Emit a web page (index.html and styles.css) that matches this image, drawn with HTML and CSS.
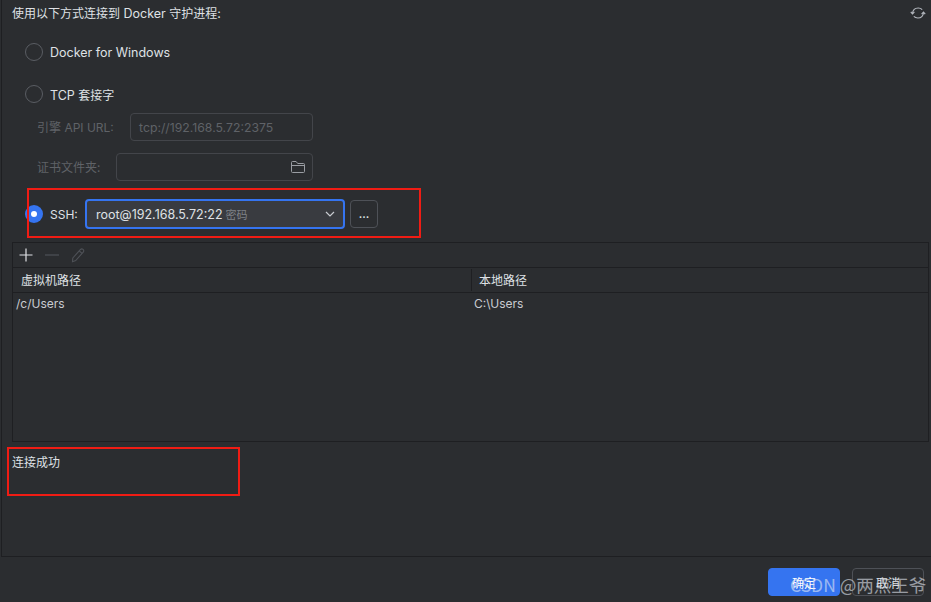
FILE: index.html
```html
<!DOCTYPE html>
<html lang="zh">
<head>
<meta charset="utf-8">
<title>Docker</title>
<link rel="stylesheet" href="styles.css">
</head>
<body>
<div class="app">
  <main class="content">
    <div class="title-row">
      <div class="title"><span class="cjk">使用以下方式连接到</span> Docker <span class="cjk">守护进程</span>:</div>
      <svg class="refresh" viewBox="0 0 16 16" width="16" height="16" fill="none" stroke="#b4b8bf" stroke-width="1.2">
        <path d="M2.5 8.5C2.8 5.2 5.2 3 8.2 3c1.6 0 3 .6 4 1.6"/>
        <path d="M.8 6.8l1.7 2 1.9-2"/>
        <path d="M13.5 7.5c-.3 3.3-2.7 5.5-5.7 5.5-1.6 0-3-.6-4-1.6"/>
        <path d="M15.2 9.2l-1.7-2-1.9 2"/>
      </svg>
    </div>
    <div class="options">
      <label class="radio-row row-docker"><span class="radio"></span><span>Docker for Windows</span></label>
      <label class="radio-row row-tcp"><span class="radio"></span><span>TCP <span class="cjk">套接字</span></span></label>
      <div class="field-row row-url">
        <span class="field-label"><span class="cjk">引擎</span> API URL:</span>
        <div class="input url-input">tcp://192.168.5.72:2375</div>
      </div>
      <div class="field-row row-cert">
        <span class="field-label cjk">证书文件夹:</span>
        <div class="input cert-input">
          <svg viewBox="0 0 16 16" width="16" height="16" fill="none" stroke="#9a9da3" stroke-width="1">
            <path d="M1.5 12.5v-9a1 1 0 0 1 1-1h3.6l1.6 2h5.8a1 1 0 0 1 1 1v7a1 1 0 0 1-1 1h-11a1 1 0 0 1-1-1z"/>
            <path d="M1.5 6.5h13"/>
          </svg>
        </div>
      </div>
      <div class="radio-row row-ssh">
        <span class="radio checked"></span>
        <span class="ssh-label">SSH:</span>
        <div class="select">
          <span class="select-main">root@192.168.5.72:22</span>
          <span class="select-sub cjk">密码</span>
          <svg class="chevron" viewBox="0 0 12 12" width="12" height="12" fill="none" stroke="#c9ccd1" stroke-width="1.2"><path d="M2 4l4 4 4-4"/></svg>
        </div>
        <button class="more">...</button>
      </div>
    </div>
    <section class="table">
      <div class="toolbar">
        <svg viewBox="0 0 16 16" width="16" height="16" fill="none" stroke="#dfe1e5" stroke-width="1.2"><path d="M8 1.5v13M1.5 8h13"/></svg>
        <svg viewBox="0 0 16 16" width="16" height="16" fill="none" stroke="#4e5157" stroke-width="1.2"><path d="M1 8h14"/></svg>
        <svg viewBox="0 0 16 16" width="16" height="16" fill="none" stroke="#4e5157" stroke-width="1.1"><path d="M2.8 11L10.5 2.5a1.9 1.9 0 0 1 2.9 2.4L5.7 13.6l-3.2 1.2z"/><path d="M9.3 4l2.8 2.4"/></svg>
      </div>
      <div class="thead">
        <div class="th th-a cjk">虚拟机路径</div>
        <div class="th th-b cjk">本地路径</div>
      </div>
      <div class="tr">
        <div class="td td-a">/c/Users</div>
        <div class="td td-b">C:\Users</div>
      </div>
    </section>
    <div class="status cjk">连接成功</div>
  </main>
  <footer class="footer">
    <button class="btn primary cjk">确定</button>
    <button class="btn cjk">取消</button>
  </footer>
  <div class="mark mark-ssh"></div>
  <div class="mark mark-status"></div>
  <div class="watermark">CSDN @两点王爷</div>
</div>
</body>
</html>
```
FILE: styles.css
```css
* { box-sizing: border-box; }
html, body { margin: 0; padding: 0; }
body {
  width: 931px;
  height: 602px;
  overflow: hidden;
  background: #2b2d30;
  color: #dfe1e5;
  font-family: Inter, "Noto Sans CJK SC", sans-serif;
  font-size: 12.5px;
}
.cjk { font-family: "Noto Sans CJK SC", sans-serif; font-size: 12px; }
.app { position: relative; width: 931px; height: 602px; display: flex; flex-direction: column; }
.content { height: 557px; margin-left: 1px; border-left: 1px solid #1e1f22; border-bottom: 1px solid #1e1f22; padding-left: 10px; display: flex; flex-direction: column; }
.title-row { height: 25px; display: flex; align-items: center; justify-content: space-between; padding-right: 5px; }
.title { line-height: 25px; }
.refresh { flex: none; }
.options { padding-left: 13px; display: flex; flex-direction: column; height: 217px; }
.radio-row { display: flex; align-items: center; }
.radio { width: 18px; height: 18px; border-radius: 50%; border: 1px solid #5a5d63; margin-right: 7px; flex: none; }
.radio.checked { background: #3574f0; border: 0; position: relative; }
.radio.checked::after { content: ""; position: absolute; left: 6px; top: 6px; width: 6px; height: 6px; border-radius: 50%; background: #fff; }
.row-docker { height: 18px; margin-top: 18px; }
.row-tcp { height: 18px; margin-top: 24px; }
.field-row { display: flex; align-items: center; height: 28px; color: #5a5d63; padding-left: 12px; }
.row-url { margin-top: 10px; }
.row-cert { margin-top: 12px; }
.field-label { color: #5f6267; width: 79px; flex: none; font-size: 12px; position: relative; top: -1px; }
.row-url .field-label { width: 93px; }
.row-url .field-label .cjk, .field-label.cjk { font-size: 12px; }
.input { height: 28px; border: 1px solid #43454a; border-radius: 4px; display: flex; align-items: center; color: #5f6267; }
.url-input { width: 183px; padding-left: 8px; font-size: 12.25px; }
.cert-input { width: 197px; justify-content: flex-end; padding-right: 6px; }
.row-ssh { height: 30px; margin-top: 18px; }
.ssh-label { width: 35px; flex: none; font-size: 12px; }
.select { width: 260px; height: 30px; border: 2px solid #3574f0; border-radius: 4px; background: #393b40; display: flex; align-items: center; padding-left: 9px; padding-right: 7px; }
.select-main { color: #dfe1e5; font-size: 12.5px; }
.select-sub { color: #7e8187; font-size: 11px; margin-left: 3px; }
.chevron { margin-left: auto; }
.more { width: 28px; height: 28px; margin-left: 5px; background: transparent; border: 1px solid #4e5157; border-radius: 4px; color: #dfe1e5; font: 600 11px Inter, sans-serif; padding: 0; }
.table { width: 917px; height: 200px; border: 1px solid #1e1f22; display: flex; flex-direction: column; }
.toolbar { height: 25px; flex: none; border-bottom: 1px solid #1e1f22; display: flex; align-items: center; gap: 10px; padding-left: 5px; }
.thead { height: 25px; flex: none; display: flex; border-bottom: 1px solid #1e1f22; }
.th { line-height: 24px; color: #dfe1e5; }
.th-a { width: 459px; padding-left: 8px; border-right: 1px solid #1e1f22; margin: 1px 0; line-height: 22px; }
.th-b { padding-left: 7px; }
.tr { display: flex; height: 20px; align-items: center; font-size: 12px; color: #c9ccd1; }
.td-a { width: 461px; padding-left: 3px; }
.status { margin-top: 12px; line-height: 16px; color: #dfe1e5; }
.footer { flex: 1; display: flex; justify-content: flex-end; align-items: flex-start; gap: 12px; padding-top: 11px; padding-right: 7px; }
.btn { width: 72px; height: 28px; border-radius: 4px; border: 1px solid #4e5157; background: transparent; color: #dfe1e5; padding: 0; }
.btn.primary { background: #3574f0; border-color: #3574f0; color: #fff; }
.mark { position: absolute; border: 2px solid #f01c14; }
.mark-ssh { left: 27px; top: 188px; width: 394px; height: 50px; }
.mark-status { left: 7px; top: 447px; width: 233px; height: 49px; }
.watermark { position: absolute; left: 790px; top: 574px; font-family: "Noto Sans CJK SC", sans-serif; font-size: 17.5px; line-height: 22px; color: rgba(228, 233, 242, 0.6); white-space: nowrap; }
```
